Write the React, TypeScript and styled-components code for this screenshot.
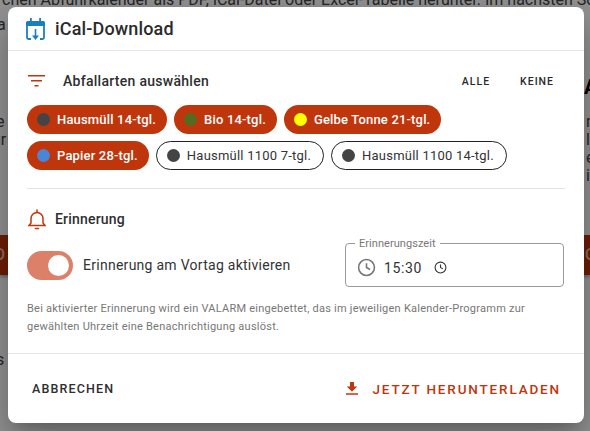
import React from "react"
import styled, { createGlobalStyle } from "styled-components"

const accent = "#c0360c"
const medium = 500

const Global = createGlobalStyle`
  html, body { margin: 0; padding: 0; height: 100%; }
  body { font-family: Roboto, "Liberation Sans", sans-serif; overflow: hidden; }
`

const Page = styled.div`
  position: relative;
  width: 590px;
  height: 431px;
  overflow: hidden;
  background: #fff;
`

const PageText = styled.p<{ $left: number; $top: number; $strong?: boolean }>`
  margin: 0;
  position: absolute;
  left: ${(p) => p.$left}px;
  top: ${(p) => p.$top}px;
  font-size: ${(p) => (p.$strong ? 20 : 16)}px;
  font-weight: ${(p) => (p.$strong ? 700 : 400)};
  line-height: 18px;
  white-space: nowrap;
  color: ${(p) => (p.$strong ? "#000" : "#444")};
`

const PageBar = styled.div`
  position: absolute;
  left: 0;
  right: 0;
  top: 235px;
  height: 40px;
  background: ${accent};
  box-shadow: 0 2px 3px rgba(0, 0, 0, 0.3);
`

const BarLabel = styled.span<{ $left: number }>`
  position: absolute;
  left: ${(p) => p.$left}px;
  top: 10px;
  color: #f0c0a0;
  font-size: 16px;
  line-height: 20px;
  font-weight: 500;
`

const Backdrop = styled.div`
  position: absolute;
  inset: 0;
  background: rgba(0, 0, 0, 0.42);
`

const Dialog = styled.div`
  position: absolute;
  left: 8px;
  top: 7px;
  width: 576px;
  height: 416px;
  background: #fff;
  border-radius: 8px;
  display: flex;
  flex-direction: column;
  box-shadow: 0 11px 15px -7px rgba(0, 0, 0, 0.2), 0 24px 38px 3px rgba(0, 0, 0, 0.14), 0 9px 46px 8px rgba(0, 0, 0, 0.12);
`

const Title = styled.header`
  height: 43px;
  display: flex;
  align-items: center;
  gap: 10px;
  padding-left: 18px;
  border-bottom: 1px solid #e4e4e4;
  font-size: 18px;
  font-weight: ${medium};
  letter-spacing: 0.15px;
  color: #2a2a2a;
`

const Content = styled.div`
  flex: 1;
  padding: 0 19px;
  display: flex;
  flex-direction: column;
`

const TypesHeader = styled.div`
  height: 30px;
  margin-top: 15px;
  padding-left: 1px;
  display: flex;
  align-items: center;
`

const HeaderLabel = styled.span`
  flex: 1;
  margin-left: 17px;
  font-size: 14px;
  font-weight: ${medium};
  letter-spacing: 0.28px;
  color: #2e2e2e;
`

const TextAction = styled.button`
  border: 0;
  background: none;
  padding: 0;
  margin-right: 11px;
  margin-left: 19px;
  font-family: inherit;
  font-size: 10.5px;
  font-weight: ${medium};
  letter-spacing: 1px;
  color: #2a2a2a;
`

const Chips = styled.div`
  display: flex;
  flex-wrap: wrap;
  gap: 7px;
  margin-top: 9px;
`

const Chip = styled.div<{ $on?: boolean }>`
  height: 29px;
  box-sizing: border-box;
  display: flex;
  align-items: center;
  gap: 7px;
  padding: 0 ${(p) => (p.$on ? 11 : 12)}px 0 10px;
  border-radius: 15px;
  font-size: 13px;
  letter-spacing: ${(p) => (p.$on ? 0.17 : 0.22)}px;
  font-weight: ${(p) => (p.$on ? medium : 400)};
  color: ${(p) => (p.$on ? "#fff" : "#333")};
  background: ${(p) => (p.$on ? accent : "#fff")};
  border: ${(p) => (p.$on ? "0" : "1px solid #222")};
`

const Dot = styled.span<{ $color: string }>`
  width: 13px;
  height: 13px;
  border-radius: 50%;
  flex: none;
  background: ${(p) => p.$color};
`

const Divider = styled.hr`
  border: 0;
  border-top: 1px solid #e4e4e4;
  margin: 18px 0 0;
  width: 100%;
`

const ReminderHead = styled.div`
  display: flex;
  align-items: center;
  gap: 9px;
  height: 24px;
  margin-top: 18px;
  padding-left: 1px;
  font-size: 14px;
  font-weight: ${medium};
  letter-spacing: 0.2px;
  color: #2e2e2e;
`

const ReminderRow = styled.div`
  display: flex;
  align-items: center;
  margin-top: 12px;
  height: 44px;
`

const Switch = styled.div`
  width: 46px;
  height: 29px;
  border-radius: 15px;
  background: #dc8069;
  display: flex;
  align-items: center;
  justify-content: flex-end;
  padding-right: 4px;
  box-sizing: border-box;
`

const Knob = styled.div`
  width: 21px;
  height: 21px;
  border-radius: 50%;
  background: #fff;
`

const SwitchLabel = styled.span`
  margin-left: 10px;
  font-size: 14px;
  letter-spacing: 0.27px;
  color: #333;
  width: 262px;
`

const TimeField = styled.fieldset`
  margin: -5px 0 0;
  padding: 0 0 0 11px;
  width: 219px;
  height: 49px;
  box-sizing: border-box;
  border: 1px solid #999;
  border-radius: 4px;
  display: flex;
  align-items: center;
  gap: 8px;
`

const TimeLegend = styled.legend`
  padding: 0 4px;
  margin-left: -2px;
  font-size: 11px;
  line-height: 11px;
  letter-spacing: 0.05px;
  color: #777;
`

const TimeValue = styled.span`
  font-size: 14px;
  letter-spacing: 0.6px;
  color: #333;
  margin-right: 4px;
`

const Hint = styled.p`
  margin: 13px 0 0;
  font-size: 11px;
  line-height: 18px;
  letter-spacing: 0.24px;
  color: #777;
`

const Footer = styled.footer`
  height: 69px;
  border-top: 1px solid #e4e4e4;
  display: flex;
  align-items: center;
  justify-content: space-between;
  padding: 0 23px 0 24px;
`

const Cancel = styled.button`
  border: 0;
  background: none;
  padding: 0;
  font-family: inherit;
  font-size: 12.5px;
  font-weight: ${medium};
  letter-spacing: 1.15px;
  color: #2e2e2e;
`

const Download = styled.button`
  border: 0;
  background: none;
  padding: 0;
  display: flex;
  align-items: center;
  gap: 13px;
  font-family: inherit;
  font-size: 13.5px;
  font-weight: ${medium};
  letter-spacing: 1.84px;
  color: ${accent};
`

const CalendarIcon = () => (
  <svg width="19" height="22" viewBox="0 0 19 22" fill="none">
    <path d="M1 8v11.5A1.5 1.5 0 0 0 2.5 21H5M14 21h2.5a1.5 1.5 0 0 0 1.5-1.5V8" stroke="#1a7fbf" strokeWidth="1.8" />
    <path d="M0 8V4.5A1.5 1.5 0 0 1 1.5 3h16A1.5 1.5 0 0 1 19 4.5V8z" fill="#1a7fbf" />
    <rect x="4" y="0" width="1.8" height="4" fill="#1a7fbf" />
    <rect x="13.2" y="0" width="1.8" height="4" fill="#1a7fbf" />
    <path d="M8.7 11h1.6v6.5h2.7L9.5 22 6 17.5h2.7z" fill="#1a7fbf" />
  </svg>
)

const FilterIcon = () => (
  <svg width="18" height="12" viewBox="0 0 18 12">
    <path d="M0 0h17v1.6H0zM3 5h11v1.6H3zM6.5 10h4v1.6h-4z" fill={accent} />
  </svg>
)

const BellIcon = () => (
  <svg width="18" height="21" viewBox="0 0 18 21" fill="none" stroke={accent} strokeWidth="1.5">
    <path d="M1 16.5h16l-2-2.5V9.5a6 6 0 0 0-12 0V14z" />
    <path d="M9 1v2.5M7.5 19.4h3" strokeLinecap="round" />
  </svg>
)

const ClockIcon = ({ size, color }: { size: number; color: string }) => (
  <svg width={size} height={size} viewBox="0 0 24 24" fill="none" stroke={color} strokeWidth="2">
    <circle cx="12" cy="12" r="10" />
    <path d="M12 6.5V12l4.5 2.5" />
  </svg>
)

const DownloadIcon = () => (
  <svg width="14" height="13" viewBox="0 0 14 13">
    <path d="M5 0h4v4.5h3.2L7 9.7 1.8 4.5H5zM1 11.2h12v1.6H1z" fill={accent} />
  </svg>
)

export default function App() {
  return (
    <Page>
      <Global />
      <PageText $left={2} $top={-9}>chen Abfuhrkalender als PDF, iCal-Datei oder Excel-Tabelle herunter. Im nächsten Schritt</PageText>
      <PageText $left={-3} $top={16}>a</PageText>
      <PageText $left={-8} $top={113}>le</PageText>
      <PageText $left={-8} $top={131}>ur</PageText>
      <PageText $left={-4} $top={351}>s</PageText>
      <PageText $left={584} $top={78} $strong>A</PageText>
      <PageText $left={586} $top={113}>n</PageText>
      <PageText $left={586} $top={131}>ll</PageText>
      <PageText $left={586} $top={149}>e</PageText>
      <PageText $left={586} $top={167}>ie</PageText>
      <PageBar>
        <BarLabel $left={-6}>O</BarLabel>
        <BarLabel $left={585}>Q</BarLabel>
      </PageBar>
      <Backdrop />
      <Dialog>
        <Title>
          <CalendarIcon />
          iCal-Download
        </Title>
        <Content>
          <TypesHeader>
            <FilterIcon />
            <HeaderLabel>Abfallarten auswählen</HeaderLabel>
            <TextAction>ALLE</TextAction>
            <TextAction>KEINE</TextAction>
          </TypesHeader>
          <Chips>
            <Chip $on><Dot $color="#444" />Hausmüll 14-tgl.</Chip>
            <Chip $on><Dot $color="#556b1f" />Bio 14-tgl.</Chip>
            <Chip $on><Dot $color="#ffff00" />Gelbe Tonne 21-tgl.</Chip>
            <Chip $on><Dot $color="#4a86d8" />Papier 28-tgl.</Chip>
            <Chip><Dot $color="#444" />Hausmüll 1100 7-tgl.</Chip>
            <Chip><Dot $color="#444" />Hausmüll 1100 14-tgl.</Chip>
          </Chips>
          <Divider />
          <ReminderHead>
            <BellIcon />
            Erinnerung
          </ReminderHead>
          <ReminderRow>
            <Switch><Knob /></Switch>
            <SwitchLabel>Erinnerung am Vortag aktivieren</SwitchLabel>
            <TimeField>
              <TimeLegend>Erinnerungszeit</TimeLegend>
              <ClockIcon size={19} color="#777" />
              <TimeValue>15:30</TimeValue>
              <ClockIcon size={13} color="#333" />
            </TimeField>
          </ReminderRow>
          <Hint>
            Bei aktivierter Erinnerung wird ein VALARM eingebettet, das im jeweiligen Kalender-Programm zur
            <br />
            gewählten Uhrzeit eine Benachrichtigung auslöst.
          </Hint>
        </Content>
        <Footer>
          <Cancel>ABBRECHEN</Cancel>
          <Download>
            <DownloadIcon />
            JETZT HERUNTERLADEN
          </Download>
        </Footer>
      </Dialog>
    </Page>
  )
}
